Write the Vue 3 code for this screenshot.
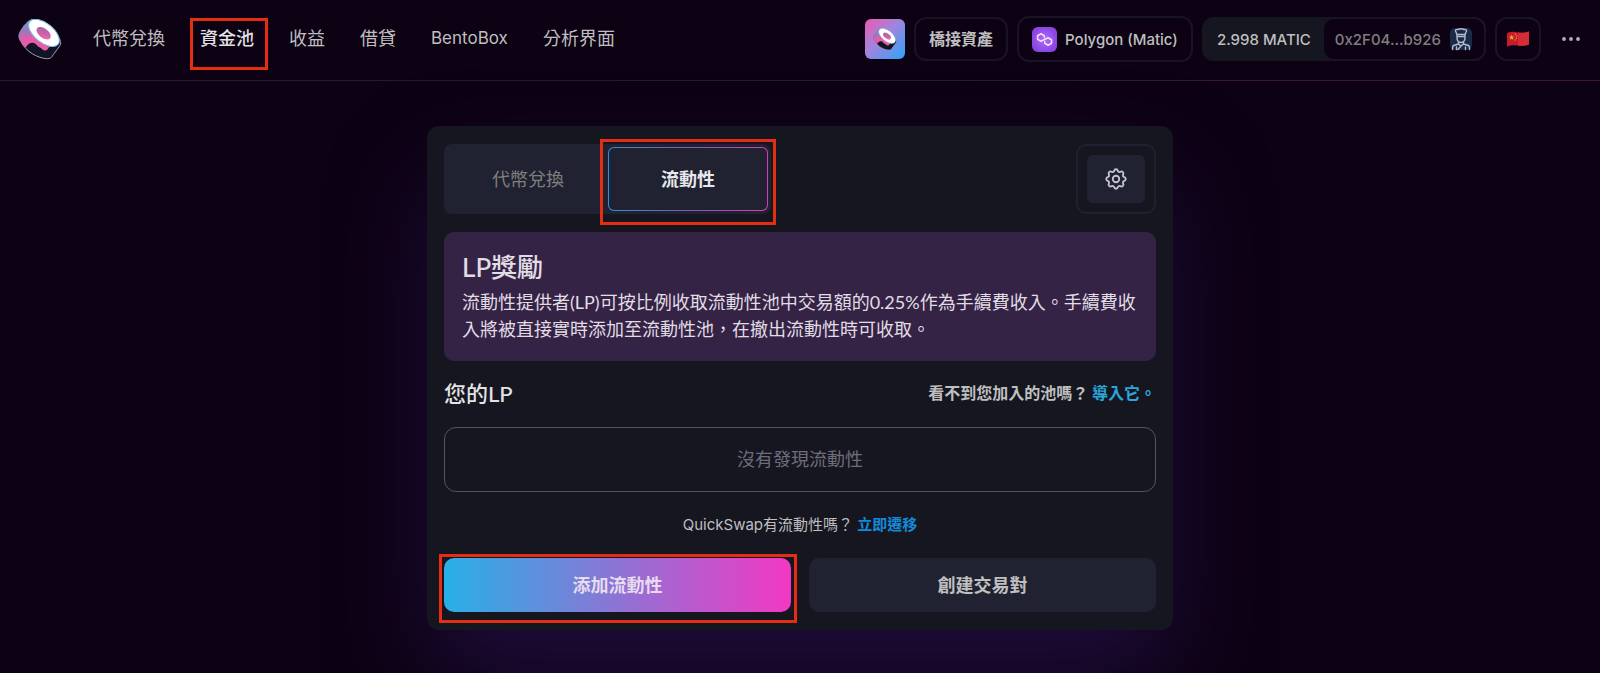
<script setup>
const links = [
  { label: '代幣兌換' },
  { label: '資金池', active: true },
  { label: '收益' },
  { label: '借貸' },
  { label: 'BentoBox', latin: true },
  { label: '分析界面' },
]
</script>

<template>
  <div class="page" lang="zh-Hant">
    <svg class="defs" aria-hidden="true">
      <defs>
        <linearGradient id="roll-side" x1="0" y1="0" x2="0.3" y2="1">
          <stop offset="0" stop-color="#5aa7d8" />
          <stop offset="0.35" stop-color="#9b78bd" />
          <stop offset="0.65" stop-color="#e85aa8" />
          <stop offset="1" stop-color="#ee5aa6" />
        </linearGradient>
        <linearGradient id="roll-hole" x1="0" y1="0" x2="1" y2="1">
          <stop offset="0" stop-color="#8a6aa8" />
          <stop offset="0.6" stop-color="#d95fa9" />
          <stop offset="1" stop-color="#e87fbd" />
        </linearGradient>
        <symbol id="roll" viewBox="0 0 132 124">
          <path d="M34 5C20 14 6 36 3 46C1 54 3 60 8 68C16 84 28 96 44 106C58 114 74 120 88 120C98 120 102 116 106 108L127 80C131 70 126 58 116 46C100 26 74 8 54 3C46 1 40 1 34 5Z" fill="#111426" stroke="#9a9fb8" stroke-width="3" />
          <path d="M34 5C20 14 6 36 3 46C1 54 3 60 8 68C12 76 17 82 22 87C28 78 34 72 44 72C54 72 57 84 66 86C72 88 74 97 84 95C92 93 90 84 98 83L118 76L70 14Z" fill="url(#roll-side)" />
          <ellipse cx="78" cy="42" rx="55" ry="29" transform="rotate(39 78 42)" fill="#fff" stroke="#78b9e2" stroke-width="3" />
          <ellipse cx="77" cy="43" rx="25" ry="14" transform="rotate(37 77 43)" fill="url(#roll-hole)" />
        </symbol>
      </defs>
    </svg>

    <header class="topbar">
      <a class="logo" href="#" aria-label="Sushi">
        <svg width="44" height="41"><use href="#roll" /></svg>
      </a>
      <nav class="nav">
        <a v-for="l in links" :key="l.label" href="#" :class="{ active: l.active, latin: l.latin }">{{ l.label }}</a>
      </nav>
      <div class="tools">
        <button class="app-icon" aria-label="Sushi app">
          <svg width="24" height="23"><use href="#roll" /></svg>
        </button>
        <button class="pill bridge">橋接資產</button>
        <button class="pill network">
          <svg width="25" height="25" viewBox="0 0 25 25" aria-hidden="true">
            <defs>
              <radialGradient id="poly"><stop offset="0" stop-color="#ad70f2" /><stop offset="1" stop-color="#8b45e4" /></radialGradient>
            </defs>
            <rect width="25" height="25" rx="6" fill="url(#poly)" />
            <path d="M12.300 10.300V8.700L9 6.700L5.600 8.700V12.300L9 14.300L16.100 10.700L19.500 12.700V16.300L16.100 18.300L12.800 16.300V14.700" fill="none" stroke="#f4dcff" stroke-width="1.600" stroke-linejoin="round" stroke-linecap="round" />
          </svg>
          <span>Polygon (Matic)</span>
        </button>
        <div class="wallet">
          <span class="balance">2.998 MATIC</span>
          <button class="account">
            <span>0x2F04...b926</span>
            <svg width="22" height="24" viewBox="0 0 22 24" aria-hidden="true">
              <rect y="1" width="22" height="22" rx="5" fill="#1b2a48" />
              <g fill="none" stroke="#b4bccb" stroke-width="1.400" stroke-linejoin="round" stroke-linecap="round">
                <path d="M7 7.500L5.500 4Q5.500 2 8 2.500Q11 1 14 2.500Q16.500 2 16.500 4L15 7.500Z" />
                <path d="M7 7.500V11Q7 15 11 15.500Q15 15 15 11V7.500M7.500 9.500H14.500" />
                <path d="M8.500 15V17L11 19L13.500 17V15M8.500 17L3.500 18.500Q2.500 19 2.500 22.500M13.500 17L18.500 18.500Q19.500 19 19.500 22.500M6.500 22.500V20M15.500 22.500V20M11 19L8 22.500" />
              </g>
            </svg>
          </button>
        </div>
        <button class="pill lang" aria-label="語言">
          <svg width="22" height="16" viewBox="0 0 22 16" aria-hidden="true">
            <path d="M0 2Q5 0 11 1.500Q16 2.500 22 .5V13.500Q16 15.500 11 14.500Q5 13.500 0 15.500Z" fill="#c51d2b" />
            <path d="M11 1.500Q16 2.500 22 .5V13.500Q16 15.500 11 14.500Z" fill="#d52c37" />
            <path d="M4.500 3.500L5.300 5.400L7.200 5.500L5.800 6.800L6.300 8.700L4.600 7.700L3 8.800L3.400 6.900L2 5.700L3.900 5.500Z" fill="#f2a52c" />
            <g fill="#eb8e2c"><circle cx="8.300" cy="3.200" r=".7" /><circle cx="9.600" cy="5" r=".7" /><circle cx="9.500" cy="7.300" r=".7" /><circle cx="8" cy="9" r=".7" /></g>
          </svg>
        </button>
        <button class="more" aria-label="更多">
          <svg width="18" height="4" viewBox="0 0 18 4"><g fill="#aeb0bf"><circle cx="2" cy="2" r="1.900" /><circle cx="9" cy="2" r="1.900" /><circle cx="16" cy="2" r="1.900" /></g></svg>
        </button>
      </div>
    </header>

    <main class="main">
      <section class="card">
        <div class="card-head">
          <div class="tabs">
            <button class="tab">代幣兌換</button>
            <div class="tab-mark"><button class="tab selected">流動性</button></div>
          </div>
          <div class="settings">
            <button aria-label="設定">
              <svg width="26" height="26" viewBox="0 0 24 24" fill="none" stroke="#c3c4d0" stroke-width="1.700" stroke-linejoin="round" aria-hidden="true">
                <path d="M10.325 4.317c.426-1.756 2.924-1.756 3.350 0a1.724 1.724 0 002.573 1.066c1.543-.94 3.310.826 2.370 2.370a1.724 1.724 0 001.065 2.572c1.756.426 1.756 2.924 0 3.350a1.724 1.724 0 00-1.066 2.573c.94 1.543-.826 3.310-2.370 2.370a1.724 1.724 0 00-2.572 1.065c-.426 1.756-2.924 1.756-3.350 0a1.724 1.724 0 00-2.573-1.066c-1.543.94-3.310-.826-2.370-2.370a1.724 1.724 0 00-1.065-2.572c-1.756-.426-1.756-2.924 0-3.350a1.724 1.724 0 001.066-2.573c-.94-1.543.826-3.310 2.370-2.370.996.608 2.296.070 2.572-1.065z" />
                <circle cx="12" cy="12" r="3" />
              </svg>
            </button>
          </div>
        </div>

        <div class="notice">
          <h1>LP獎勵</h1>
          <p>流動性提供者(LP)可按比例收取流動性池中交易額的0.25%作為手續費收入。手續費收入將被直接實時添加至流動性池，在撤出流動性時可收取。</p>
        </div>

        <div class="own">
          <h2>您的LP</h2>
          <p>看不到您加入的池嗎？ <a href="#">導入它。</a></p>
        </div>

        <div class="empty">沒有發現流動性</div>

        <p class="migrate">QuickSwap有流動性嗎？ <a href="#">立即遷移</a></p>

        <div class="actions">
          <div class="add-mark"><button class="btn add">添加流動性</button></div>
          <button class="btn create">創建交易對</button>
        </div>
      </section>
    </main>
  </div>
</template>

<style>
body {
  margin: 0;
  background: #0d0214;
}
</style>

<style scoped>
.page {
  min-height: 100vh;
  box-sizing: border-box;
  overflow: hidden;
  background: #0d0214;
  color: #bfbfbf;
  font-family: Inter, "Noto Sans CJK TC", sans-serif;
  font-size: 16px;
}
.defs {
  position: absolute;
  width: 0;
  height: 0;
}
svg {
  display: block;
  flex: none;
}
button {
  border: 0;
  padding: 0;
  margin: 0;
  background: none;
  color: inherit;
  font: inherit;
  cursor: pointer;
}
a {
  color: inherit;
  text-decoration: none;
}
h1, h2, p {
  margin: 0;
}
.topbar {
  display: flex;
  align-items: center;
  height: 78px;
  padding: 0 20px 2px 18px;
  border-bottom: 1px solid;
  border-image: linear-gradient(90deg, #1e1d35, #3a1636) 1;
}
.nav {
  display: flex;
  gap: 35px;
  margin: 0 0 2px 31px;
  font-size: 18px;
  line-height: 27px;
}
.nav a {
  position: relative;
  white-space: nowrap;
}
.nav .latin {
  font-size: 17px;
}
.nav .active {
  color: #e3e3e3;
  font-weight: 500;
}
.nav .active::after {
  content: "";
  position: absolute;
  inset: -7px -14px -18px -10px;
  border: 3px solid #e42d12;
}
.tools {
  display: flex;
  align-items: center;
  gap: 9px;
  margin-left: auto;
  font-size: 15px;
  font-weight: 500;
}
.app-icon {
  display: grid;
  place-items: center;
  width: 40px;
  height: 40px;
  border-radius: 6px;
  background: linear-gradient(135deg, #e65db5 5%, #a184dd 45%, #36a2f5 95%);
}
.pill {
  display: flex;
  align-items: center;
  justify-content: center;
  box-sizing: border-box;
  height: 44px;
  border: 2px solid #171523;
  border-radius: 12px;
  white-space: nowrap;
}
.bridge {
  padding: 0 13px 2px;
  font-size: 16px;
  font-weight: 700;
}
.network {
  gap: 8px;
  height: 46px;
  padding: 0 13px;
}
.wallet {
  display: flex;
  align-items: center;
  height: 44px;
  border-radius: 12px;
  background: #161621;
  white-space: nowrap;
}
.balance {
  padding: 0 11px 0 15px;
}
.account {
  display: flex;
  align-items: center;
  gap: 9px;
  box-sizing: border-box;
  height: 44px;
  padding: 0 12px 0 11px;
  border: 2px solid #171523;
  border-radius: 12px;
  background: #0d0214;
  color: #7f7f7f;
}
.lang {
  width: 46px;
}
.more {
  margin-left: 12px;
  padding: 10px 0;
}
.main {
  display: flex;
  justify-content: center;
  padding: 45px 20px 44px;
}
.card {
  width: 100%;
  max-width: 746px;
  box-sizing: border-box;
  padding: 18px 17px;
  border-radius: 12px;
  background: #161621;
  box-shadow: 0 50px 100px -10px #200e3e;
}
.card-head {
  display: flex;
  justify-content: space-between;
  height: 70px;
}
.tabs {
  display: flex;
  align-items: center;
  box-sizing: border-box;
  padding: 3px 3px 3px 4px;
  border-radius: 8px;
  background: #202231;
  font-size: 18px;
}
.tab {
  width: 160px;
  height: 64px;
  padding-bottom: 2px;
  color: #7f7f7f;
}
.tab-mark, .add-mark {
  position: relative;
}
.tab-mark::after {
  content: "";
  position: absolute;
  inset: -8px -8px -14px;
  border: 3px solid #e42d12;
  pointer-events: none;
}
.selected {
  display: block;
  border: 1px solid transparent;
  border-radius: 6px;
  background: linear-gradient(#202231, #202231) padding-box, linear-gradient(90deg, #2b93d5, #7a5cc4 45%, #d83db0) border-box;
  color: #e8e8ec;
  font-weight: 700;
}
.settings {
  box-sizing: border-box;
  padding: 9px;
  border: 2px solid #202130;
  border-radius: 10px;
}
.settings button {
  display: grid;
  place-items: center;
  width: 58px;
  height: 48px;
  border-radius: 6px;
  background: #202231;
}
.notice {
  margin-top: 18px;
  padding: 18px 14px 18px 18px;
  border-radius: 10px;
  background: #352346;
  color: #e1dde4;
  font-family: Lato, "Noto Sans CJK TC", sans-serif;
}
.notice h1 {
  font-size: 26px;
  line-height: 34px;
  font-weight: 500;
}
.notice p {
  padding: 5px 0 0;
  font-size: 18px;
  line-height: 27px;
}
.own {
  display: flex;
  align-items: center;
  justify-content: space-between;
  box-sizing: border-box;
  height: 66px;
  padding-bottom: 4px;
}
.own h2 {
  color: #e3e3e3;
  font-family: Lato, "Noto Sans CJK TC", sans-serif;
  font-size: 22px;
  font-weight: 500;
}
.own p {
  font-weight: 700;
}
.own a {
  color: #2aa6d8;
}
.empty {
  display: grid;
  place-items: center;
  height: 60px;
  padding-bottom: 3px;
  border: 1px solid #53545e;
  border-radius: 12px;
  color: #6d6d7c;
  font-size: 18px;
}
.migrate {
  font-size: 15px;
  line-height: 66px;
  text-align: center;
}
.migrate a {
  color: #1489d8;
  font-weight: 700;
}
.actions {
  display: grid;
  grid-template-columns: 1fr 1fr;
  gap: 18px;
}
.btn {
  display: block;
  width: 100%;
  height: 54px;
  padding-bottom: 3px;
  border-radius: 10px;
  font-size: 18px;
  font-weight: 700;
}
.add {
  background: linear-gradient(90deg, #27b0e6, #f338c3);
  color: #e7dbef;
}
.add-mark::after {
  content: "";
  position: absolute;
  inset: -4px -6px -11px -5px;
  border: 3px solid #e42d12;
  pointer-events: none;
}
.create {
  background: #202231;
}
</style>
